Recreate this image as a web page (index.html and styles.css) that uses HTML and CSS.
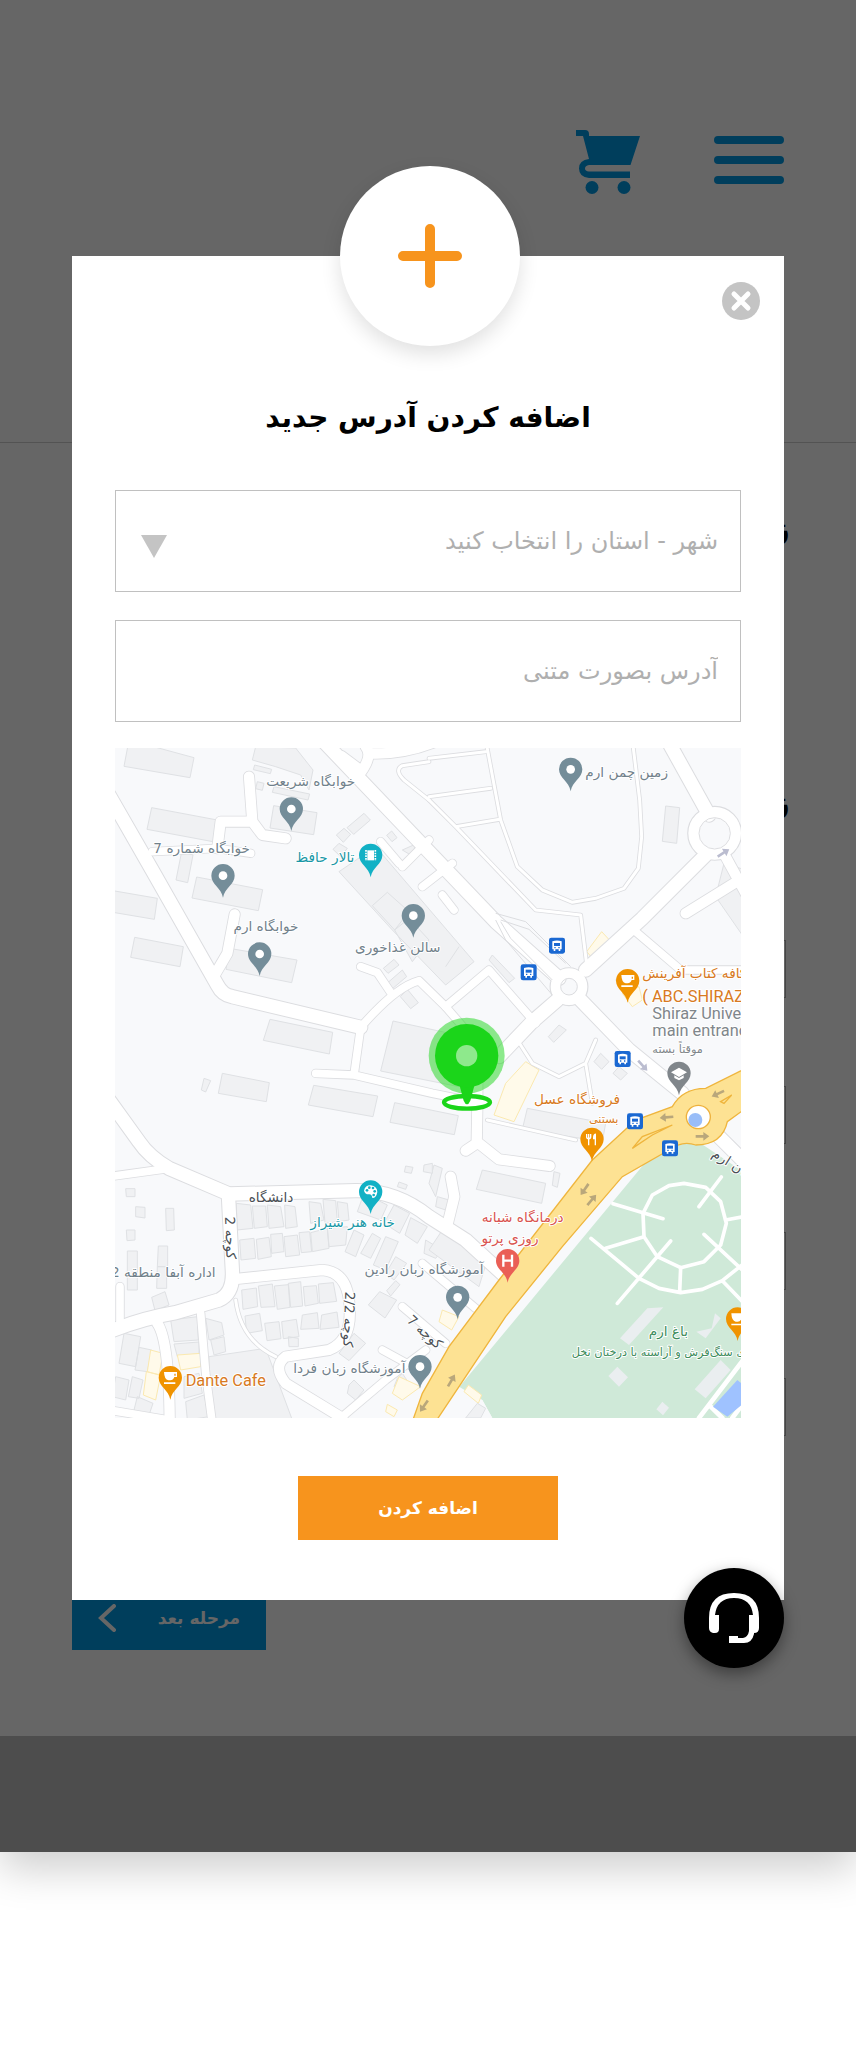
FILE: index.html
```html
<!DOCTYPE html>
<html lang="fa" dir="rtl">
<head>
<meta charset="utf-8">
<meta name="viewport" content="width=device-width, initial-scale=1">
<title>اضافه کردن آدرس جدید</title>
<link rel="stylesheet" href="styles.css">
</head>
<body>
<div class="page">
  <div class="checkout">
    <header class="topbar">
      <button class="icon-button" type="button" aria-label="منو">
        <svg width="70" height="48" viewBox="0 0 70 48" fill="none" stroke="currentColor" stroke-width="8" stroke-linecap="round"><path d="M4 4H66M4 24H66M4 44H66"/></svg>
      </button>
      <a class="icon-button" href="#cart" aria-label="سبد خرید">
        <svg width="64" height="64" viewBox="0 0 64 64" fill="currentColor"><path d="M0 0H9Q13 0 13 4V6H64L54.500 35H13Q9 35.500 9 38.500Q9 41 13 41.500H54V48H13Q3 47 3 38.500Q3 30 13 29L7 6H0Z"/><circle cx="16" cy="57.500" r="6.500"/><circle cx="48" cy="57.500" r="6.500"/></svg>
      </a>
    </header>
    <main class="steps">
      <h2 class="steps-title">زمان</h2>
      <h2 class="steps-title">زمان</h2>
      <div class="slots">
        <div class="slot"></div>
        <div class="slot"></div>
        <div class="slot"></div>
        <div class="slot"></div>
      </div>
      <button class="next" type="button">
        <span>مرحله بعد</span>
        <svg width="18" height="28" viewBox="0 0 18 28" fill="none" stroke="currentColor" stroke-width="4" stroke-linecap="round"><path d="M16 2L3 14L16 26"/></svg>
      </button>
    </main>
    <footer class="footer"></footer>
  </div>
  <div class="overlay">
    <section class="modal" role="dialog" aria-labelledby="modal-title">
      <div class="badge">
        <svg width="64" height="64" viewBox="0 0 64 64" stroke="#f7941d" stroke-width="10" stroke-linecap="round"><path d="M32 5V59M5 32H59"/></svg>
      </div>
      <button class="close" type="button" aria-label="بستن">
        <svg width="38" height="38" viewBox="0 0 38 38"><circle cx="19" cy="19" r="19" fill="#c4c4c4"/><path d="M12 12L26 26M26 12L12 26" stroke="#fff" stroke-width="5" stroke-linecap="round"/></svg>
      </button>
      <h1 class="title" id="modal-title">اضافه کردن آدرس جدید</h1>
      <form class="form">
        <div class="fields">
          <div class="select-wrap">
            <select class="field" aria-label="شهر - استان"><option>شهر - استان را انتخاب کنید</option></select>
            <svg class="arrow" width="26" height="23" viewBox="0 0 26 23"><path d="M0 0H26L13 23Z" fill="#c4c4c4"/></svg>
          </div>
          <input class="field" type="text" placeholder="آدرس بصورت متنی" aria-label="آدرس بصورت متنی">
        </div>
        <svg class="map" viewBox="18 24 1878 2010" role="img" aria-label="نقشه">
          <defs>
            <path id="pin" d="M0 66C-5 36-35 26-35 0A35 35 0 1 1 35 0C35 26 5 36 0 66Z"/>
            <g id="bus"><rect x="-24" y="-24" width="48" height="48" rx="7" fill="#1a68d2"/><path d="M-14-13Q0-18 14-13V11H10V16H5V11H-5V16H-10V11H-14Z" fill="#fff"/><path d="M-9-8H9V1H-9Z" fill="#1a68d2"/><path d="M-8 6H-4M4 6H8" stroke="#1a68d2" stroke-width="4"/></g>
            <g id="cup"><use href="#pin" fill="#f09300"/><path d="M-19-17H20V-2H12Q8 8 0 8H-6Q-18 6-19-17ZM12-12V-6H16V-12ZM-19 14H15V19H-19Z" fill="#fff" fill-rule="evenodd"/></g>
            <g id="spot"><use href="#pin" fill="#748d99"/><circle r="13" fill="#fff"/></g>
            <path id="arr" d="M-20-4H3V-13L21 0L3 13V4H-20Z"/>
            <g id="wide">
              <path d="M0 165L135 400L325 735Q340 765 370 770L755 862"/>
              <path d="M640 0L950 325L1160 545L1350 715"/>
              <path d="M1430 690L1600 535L1790 345M1675 0L1800 225"/>
              <path d="M1345 780L1270 845L1170 950M1410 775L1560 930L1720 1060"/>
              <path d="M0 1080L90 1205Q120 1250 180 1285L360 1362L740 1352Q860 1350 960 1430L1070 1500L1190 1610"/>
              <path d="M358 1362L370 1590Q375 1660 330 1680L200 1718Q100 1735 0 1775"/>
              <path d="M1830 1190L1910 1270"/>
            </g>
            <g id="medium">
              <path d="M420 110L430 245L460 285L530 295M430 245H335L325 325M377 523L355 640L320 700"/>
              <path d="M770 20Q795 50 745 110M780 40Q880 45 980 5"/>
              <path d="M370 1618L640 1590Q710 1595 720 1680Q735 1800 660 1830L530 1850Q490 1880 530 1930L700 2034"/>
              <path d="M1105 1010V1100L1103 1210L1070 1232M1103 1205L1170 1258L1322 1278"/>
              <path d="M1025 1310L1036 1370L1015 1455M145 1750Q180 1800 182 2040"/>
              <path d="M1730 520L1875 430M1850 350L1910 460"/>
            </g>
            <g id="small">
              <path d="M755 862Q860 740 930 722L1010 800L1140 690L1280 850M850 765L805 698L755 680"/>
              <path d="M755 862L735 1005M620 1000L735 1005L970 1060L1110 1088M130 335L325 325L425 340"/>
              <path d="M0 1310L180 1285M275 1720L290 1900L310 2050M33 1640V1760M0 2010L180 2040"/>
              <path d="M700 2030L830 1920L950 1830M820 1830L930 1890M815 305L870 370"/>
              <path d="M880 1700L1010 1810M940 1570L1100 1705M1010 800L1070 870"/>
              <path d="M1580 575L1715 690H1900M880 380L960 300M940 440L1030 370"/>
              <path d="M1000 465L1035 510M700 45L760 90"/>
            </g>
            <g id="narrow">
              <path d="M1130 0L1175 240L1225 380L1300 450L1390 487L1460 475L1545 445L1588 385L1598 290L1592 180L1570 0"/>
              <path d="M960 180L1040 260L1280 510L1415 525L1435 690M960 55L1130 35M960 170L1145 145M1040 260L1172 238"/>
              <path d="M960 65L880 77Q855 90 885 120L960 180M1225 900L1270 970L1350 1010L1430 970L1460 900M1430 970L1450 1090"/>
              <path d="M380 1680Q395 1800 500 1850M1135 1140L1400 1200"/>
            </g>
          </defs>
          <rect x="18" y="24" width="1878" height="2010" fill="#f8f9fb"/>
          <g class="house">
            <path d="M60 0L255 53L243 113L45 79ZM128 203L325 240L312 305L114 268ZM218 335L252 345L236 428L201 420ZM263 411L461 449L448 512L249 474ZM0 450L145 475L136 538L0 515ZM77 592L223 620L213 680L65 652Z"/>
            <path d="M361 625L564 660L548 728L351 688ZM483 838L671 877L661 942L463 901ZM494 197L624 218L614 284L483 264ZM440 20L560 24L612 90L600 150L575 105L500 80L430 60ZM437 75L488 88L484 101L433 89ZM445 125L465 130L460 151L440 146ZM495 140L602 162L597 180L490 157Z"/>
            <path d="M765 220L784 240L734 283L714 263ZM705 265L725 283L703 307L682 285ZM690 310L715 325L695 350L672 328ZM848 273L864 293L849 305L833 286ZM690 395L800 320L1095 665L1010 735L850 570ZM790 497L835 457L900 515L857 570ZM857 570L900 535L960 600L910 665ZM1010 680L1050 620M855 658L870 675L837 700L823 685ZM880 690L893 710L848 748L834 730ZM895 748L928 788L905 806L874 770ZM1150 645L1217 715L1200 728L1140 660Z"/>
            <path d="M852 843L1090 895L1050 1040L815 993ZM340 1000L481 1028L472 1085L328 1060ZM285 1015L305 1022L290 1056L277 1050ZM614 1036L806 1068L792 1130L598 1095ZM857 1088L1048 1127L1036 1184L843 1147ZM880 330L925 310L905 345ZM1670 198L1712 203L1703 310L1660 304ZM1845 370L1910 390L1910 600L1820 470Z"/>
            <path d="M1540 700L1570 730L1550 755L1520 720ZM1318 890L1350 855L1372 870L1334 907ZM1475 940L1500 965L1478 988L1455 965ZM1530 980L1555 1000L1535 1020L1512 1000ZM1255 1105L1490 1150L1480 1205L1240 1168ZM1120 1290L1310 1330L1298 1390L1102 1348ZM1335 1295L1353 1300L1345 1342L1330 1336ZM960 1330L975 1275L1000 1285L980 1370ZM985 1370L1020 1380L1010 1410L980 1400Z"/>
            <path d="M382 1390L425 1395L432 1465L384 1470ZM430 1398H470L475 1460L436 1465ZM475 1395L515 1400L525 1460L480 1465ZM527 1395L558 1400L565 1460L530 1465ZM600 1385L635 1390L645 1440L605 1450ZM642 1378L680 1382L685 1445L648 1450ZM685 1385L715 1390L720 1440L690 1445ZM392 1500L435 1495L440 1555L396 1560ZM442 1498L480 1492L487 1550L447 1558ZM485 1483L520 1480L525 1535L488 1540ZM525 1490L565 1485L572 1545L530 1550ZM570 1478L602 1475L608 1535L577 1538ZM605 1478L655 1465L660 1525L610 1535ZM655 1465L715 1460L710 1515L660 1520Z"/>
            <path d="M735 1470L765 1485L740 1550L708 1535ZM790 1480L815 1495L785 1555L755 1540ZM830 1490L868 1505L830 1590L793 1575ZM745 1415L765 1360L835 1395L815 1440ZM855 1395L902 1420L872 1480L825 1450ZM905 1433L955 1460L925 1510L888 1485ZM950 1500L1000 1530L980 1555L945 1540ZM860 1550L893 1570L855 1620L830 1600ZM945 1275L970 1270V1300L943 1295ZM890 1278L912 1282L907 1300L886 1296ZM870 1326L895 1335L890 1348L865 1340ZM50 1346H78V1370H52ZM80 1400L108 1402V1434L80 1430ZM170 1405H194L196 1470L172 1472ZM52 1470H78V1500L54 1502ZM148 1518H176V1580H145ZM55 1533H85V1650H55ZM145 1580H173V1645H143ZM128 1672L168 1655L180 1695L138 1712Z"/>
            <path d="M398 1650L442 1644L446 1700L402 1708ZM448 1638L490 1632L498 1700L456 1702ZM496 1638L538 1634L543 1702L505 1708ZM538 1630L575 1625L581 1698L545 1702ZM583 1640L622 1637L628 1690L588 1698ZM628 1632L673 1628L683 1684L632 1690ZM408 1728L452 1720L460 1772L413 1780ZM467 1750L510 1745L516 1796L474 1802ZM518 1745L562 1738L570 1790L523 1796ZM538 1790L568 1795V1820H540ZM580 1725L625 1718L630 1765L575 1768ZM638 1725L684 1716L690 1762L633 1768ZM812 1655L863 1680L828 1734L778 1695ZM860 1622L873 1634L845 1668L833 1652Z"/>
            <path d="M185 1740L265 1730L268 1800L195 1805ZM195 1812L270 1806V1840L205 1850ZM45 1780L95 1790L80 1880L30 1870ZM90 1822L128 1830L115 1895L78 1890ZM20 1910L60 1920L50 1980L10 1970ZM70 1910L102 1920L90 1975L58 1970ZM85 1970L132 1990L120 2025L75 2010ZM290 1735L338 1748L345 1785L300 1800ZM305 1800L345 1790L350 1835L315 1845ZM300 1850L470 1825L550 2040H300ZM225 1910L270 1900L280 1960L225 1975ZM230 1985L285 1965L300 2030L235 2040ZM735 1780L770 1810L720 1862L690 1840ZM720 1935L735 1920L765 1950L740 1980L715 1960ZM865 1915L880 1900L900 1930L880 1955L855 1940ZM1000 1470L1130 1575L1110 1640L960 1530ZM1075 2034L1110 1990L1145 2034Z"/>
          </g>
          <g class="shop"><path d="M125 1830L162 1840L150 1905L115 1895ZM112 1895L155 1905L140 1980L103 1965ZM205 1845L275 1840V1880L215 1890ZM835 1993L865 2010L855 2030L830 2015ZM870 1910L935 1940L880 1980L850 1960ZM1478 575L1503 602L1455 660L1433 635ZM1540 760L1590 740L1600 780L1570 800ZM1250 965L1290 990L1215 1145L1155 1125L1190 1030ZM1000 1710L1050 1730L1028 1770L990 1745Z"/></g>
          <g class="case">
            <use href="#wide" stroke-width="46"/><use href="#medium" stroke-width="36"/><use href="#small" stroke-width="28"/><use href="#narrow" stroke-width="14"/>
            <circle cx="1380" cy="740" r="56" stroke-width="5"/><circle cx="1817" cy="280" r="80" stroke-width="5"/>
          </g>
          <g class="street">
            <use href="#wide" stroke-width="40"/><use href="#medium" stroke-width="31"/><use href="#small" stroke-width="23"/><use href="#narrow" stroke-width="9"/>
            <circle cx="1380" cy="740" r="40" stroke-width="30"/><circle cx="1817" cy="280" r="62" stroke-width="34"/>
          </g>
          <g class="ring"><circle cx="1380" cy="740" r="25"/><circle cx="1817" cy="280" r="47"/><path d="M1160 520L1250 545L1385 680M1175 540L1260 568L1370 670M1160 540L1190 600L1330 765M1175 545L1205 595L1330 720"/></g>
          <path d="M1035 1960L1120 1980L1150 2034H1910V1300L1760 1200L1640 1230Z" fill="#cfe9d8"/>
          <path d="M1050 1940L1120 1980L1150 2034H975Z" fill="#f8f9fb"/>
          <path class="shop" d="M1078 1935L1118 1965L1108 1990L1065 1955Z"/>
          <path class="house" d="M1070 2034L1105 1990L1130 2005L1115 2034Z"/>
          <g fill="none" stroke="#fff" stroke-width="11" stroke-linecap="round" stroke-linejoin="round">
            <path d="M1725 1330L1790 1342L1835 1385L1852 1450L1835 1515L1785 1565L1715 1583L1645 1550L1605 1490L1602 1420L1630 1365L1680 1337Z"/>
            <path d="M1512 1391L1662 1436M1446 1495L1590 1615L1650 1645L1715 1658L1780 1648L1840 1622L1905 1570M1490 1525L1600 1492M1685 1503L1525 1690M1837 1311L1770 1400M1850 1440L1905 1430M1785 1483L1900 1590M1715 1583L1712 1655M1840 1622L1905 1690"/>
            <path d="M1770 2034L1910 1850M1805 2000L1840 2034M1870 2034L1910 1980" stroke-width="14"/>
          </g>
          <path d="M1615 1705L1663 1702L1560 1815L1533 1795ZM1808 1765L1818 1720L1835 1735L1790 1795L1762 1775ZM1525 1880L1557 1912L1530 1940L1498 1908ZM1835 1860L1865 1890L1790 1975L1757 1948ZM1660 1985L1680 2003L1662 2026L1642 2008Z" fill="#eaeef0"/>
          <path d="M1885 1920L1910 1940V1985L1855 2030L1812 2000Z" fill="#9fc2ff"/>
          <path class="avenue" d="M940 1960L1020 1820L1170 1620L1450 1260L1580 1140L1690 1100Q1720 1045 1790 1045L1910 985V1105L1855 1145Q1840 1215 1760 1215Q1720 1200 1680 1230L1540 1310L1360 1520L1190 1730L1050 1940L980 2045H910Z"/>
          <path class="avenue" d="M1570 1225L1630 1185L1690 1155L1600 1190ZM1835 1085L1868 1065L1845 1090Z"/>
          <ellipse cx="1768" cy="1131" rx="36" ry="35" fill="#fff" stroke="#eeb13c" stroke-width="4"/><circle cx="1759" cy="1140" r="21" fill="#99bdf8"/>
          <g fill="#b9a77b">
            <use href="#arr" transform="translate(1827 1061) rotate(155)"/><use href="#arr" transform="translate(1673 1132) rotate(175)"/><use href="#arr" transform="translate(1780 1189)"/><use href="#arr" transform="translate(1427 1348) rotate(125)"/><use href="#arr" transform="translate(1448 1380) rotate(-50)"/><use href="#arr" transform="translate(1027 1922) rotate(-60)"/><use href="#arr" transform="translate(945 1998) rotate(125)"/>
          </g>
          <g fill="#bbbdd0"><use href="#arr" transform="translate(1843 339) rotate(-32)"/><use href="#arr" transform="translate(1601 977) rotate(48)"/></g>
          <use href="#bus" x="1344" y="617"/><use href="#bus" x="1259" y="697"/><use href="#bus" x="1541" y="957"/><use href="#bus" x="1578" y="1144"/><use href="#bus" x="1683" y="1225"/>
          <g class="place">
            <text x="605" y="138">خوابگاه شریعت</text>
            <text x="278" y="338">خوابگاه شماره 7</text>
            <text x="471" y="574">خوابگاه ارم</text>
            <text x="866" y="635">سالن غذاخوری</text>
            <text x="1553" y="112">زمین چمن ارم</text>
            <text x="945" y="1602">آموزشگاه زبان رادین</text>
            <text x="721" y="1898">آموزشگاه زبان فردا</text>
            <text class="from-right" x="320" y="1612">اداره آبفا منطقه 2</text>
          </g>
          <g class="place teal"><text x="648" y="366">تالار حافظ</text><text x="731" y="1462">خانه هنر شیراز</text></g>
          <g class="place orange">
            <text class="from-left" x="1600" y="715">کافه کتاب آفرینش</text>
            <text x="1404" y="1092">فروشگاه عسل</text>
            <text class="note" x="1484" y="1148">بستنی</text>
            <text class="latin" x="1600" y="786">( ABC.SHIRAZ )</text>
            <text class="latin" x="230" y="1939">Dante Cafe</text>
          </g>
          <g class="place grey"><text class="latin" x="1630" y="838">Shiraz University</text><text class="latin" x="1630" y="888">main entrance</text><text class="note from-left" x="1630" y="938">موقتاً بسته</text></g>
          <g class="place red"><text x="1241" y="1446">درمانگاه شبانه</text><text x="1203" y="1508">روزی پرتو</text></g>
          <g class="place green"><text x="1678" y="1788">باغ ارم</text><text class="note from-left" x="1388" y="1848">فضای سنگ‌فرش و آراسته با درختان نخل</text></g>
          <g class="place dark">
            <text x="486" y="1386">دانشگاه</text>
            <text transform="translate(350 1494) rotate(88)">کوچه 2</text>
            <text transform="translate(706 1738) rotate(92)">کوچه 2/2</text>
            <text transform="translate(938 1786) rotate(42)">کوچه 7</text>
            <text class="from-left" transform="translate(1806 1248) rotate(32)">خیابان ارم</text>
          </g>
          <use href="#spot" x="547" y="207"/><use href="#spot" x="342" y="407"/><use href="#spot" x="452" y="642"/><use href="#spot" x="913" y="527"/><use href="#spot" x="1385" y="88"/><use href="#spot" x="1046" y="1672"/><use href="#spot" x="933" y="1880"/>
          <use href="#cup" x="1556" y="722"/><use href="#cup" x="184" y="1913"/><use href="#cup" x="1886" y="1737"/>
          <g transform="translate(785 346)"><use href="#pin" fill="#12b1c5"/><path d="M-10-15H10V15H-10Z" fill="#fff"/><path d="M-14-16V17M14-16V17" stroke="#fff" stroke-width="5" stroke-dasharray="5 3"/></g>
          <g transform="translate(785 1356)"><use href="#pin" fill="#12b1c5"/><path d="M-20-4Q-17-20 0-20Q20-17 20 0Q17 18 5 18Q4 8-4 7Q-17 8-20-4Z" fill="#fff"/><g fill="#12b1c5"><circle cx="-11" cy="-5" r="4"/><circle cx="-4" cy="-13" r="4"/><circle cx="7" cy="-12" r="4"/><circle cx="12" cy="-2" r="4"/><circle cx="9" cy="9" r="4"/></g></g>
          <g transform="translate(1710 1000)"><use href="#pin" fill="#80868b"/><path d="M0-17L24-3L0 11L-24-3ZM-14 6L0 14L14 6V14L0 21L-14 14Z" fill="#fff"/></g>
          <g transform="translate(1449 1198)"><use href="#pin" fill="#f09300"/><path d="M-10-2V18M10-16V18M-16-16V-7Q-16-2-10-2T-4-7V-16M-10-16V-3" fill="none" stroke="#fff" stroke-width="4"/><path d="M11-18Q2-16 3 0H11Z" fill="#fff"/></g>
          <g transform="translate(1196 1562)"><use href="#pin" fill="#ea5f56"/><path d="M-13-18V18M13-18V18M-13 0H13" stroke="#fff" stroke-width="7"/></g>
          <ellipse cx="1074" cy="1087" rx="69" ry="19" fill="#fff" stroke="#1bd51a" stroke-width="13"/>
          <circle cx="1073" cy="947" r="114" fill="#1bd51a" opacity=".5"/>
          <path d="M1050 1030L1064 1082Q1074 1104 1084 1082L1098 1030Z" fill="#1bd51a"/>
          <circle cx="1073" cy="947" r="95" fill="#1bd51a"/><circle cx="1073" cy="947" r="32" fill="#8ee98c"/>
        </svg>
        <button class="submit" type="button">اضافه کردن</button>
      </form>
      <button class="support" type="button" aria-label="پشتیبانی">
        <svg width="50" height="50" viewBox="0 0 50 50"><path d="M0 25Q0 0 25 0T50 25V35Q50 40 45 40V41Q43 50 35 50H20V43H29V45H34Q39 44 40 38V22H44Q42 5 25 5T6 22H10V36Q10 40 6 40H4Q0 39 0 35Z" fill="#fff"/></svg>
      </button>
    </section>
  </div>
</div>
</body>
</html>
```
FILE: styles.css
```css
* { box-sizing: border-box; }
body { min-height: 100vh; margin: 0; background: #fff; font-family: "DejaVu Sans", sans-serif; }
button { border: 0; font: inherit; cursor: pointer; }
svg { display: block; }

.page { display: grid; box-shadow: 0 16px 40px rgba(0, 0, 0, .2); }
.checkout, .overlay { grid-area: 1 / 1; min-width: 0; }
.checkout { display: flex; flex-direction: column; background: #fff; }

.topbar { display: flex; align-items: flex-start; gap: 74px; min-height: 443px; padding: 130px 72px; border-bottom: 1px solid #d0d0d0; }
.icon-button { padding: 0; background: none; color: #009be6; }
.topbar button { padding-top: 6px; }

.steps { display: flex; flex: 1; flex-direction: column; padding: 60px 66px 86px 72px; }
.steps-title { margin: 0 0 224px; font-size: 32px; line-height: 50px; }
.steps-title + .steps-title { margin-bottom: 113px; }
.slots { display: grid; gap: 88px; margin-right: 4px; }
.slot { height: 58px; border: 1px solid #b0b0b0; }
.next { display: flex; align-items: center; align-self: flex-end; justify-content: space-between; width: 194px; height: 64px; margin-top: auto; padding: 0 26px; background: #009be6; color: #fff; font-size: 17px; font-weight: 700; }
.footer { min-height: 116px; background: #c1c1c1; }

.overlay { position: relative; padding: 256px 72px 252px; background: rgba(0, 0, 0, .6); }
.modal { position: relative; padding: 134px 43px 60px; background: #fff; }
.badge { position: absolute; top: -90px; left: 50%; display: grid; place-items: center; width: 180px; height: 180px; margin-left: -88px; border-radius: 50%; background: #fff; box-shadow: 0 8px 20px rgba(0, 0, 0, .12); }
.close { position: absolute; top: 26px; right: 24px; padding: 0; background: none; }
.title { margin: 0 0 44px; font-size: 28px; line-height: 56px; text-align: center; }

.form { display: flex; flex-direction: column; gap: 26px; }
.fields { display: grid; gap: 28px; }
.select-wrap { position: relative; }
.field { display: block; width: 100%; height: 102px; padding: 0 22px; border: 1px solid #c0c0c0; border-radius: 0; outline: 0; appearance: none; background: #fff; color: #afafaf; font: 24px "DejaVu Sans", sans-serif; }
.field::placeholder { color: #afafaf; opacity: 1; }
.arrow { position: absolute; top: 45px; left: 26px; }
.submit { align-self: center; width: 260px; height: 64px; margin-top: 32px; background: #f7941d; color: #fff; font-size: 17px; font-weight: 700; }
.support { position: absolute; right: 0; bottom: -68px; display: grid; place-items: center; width: 100px; height: 100px; padding: 0; border-radius: 50%; background: #000; box-shadow: 0 6px 16px rgba(0, 0, 0, .4); }

.map { width: 100%; height: auto; }
.house { fill: #f0f1f3; stroke: #dfe1e4; stroke-width: 3; }
.shop { fill: #fffaea; stroke: #fbe9b0; stroke-width: 3; }
.case { fill: none; stroke: #dcdde0; stroke-linecap: round; stroke-linejoin: round; }
.street { fill: none; stroke: #fff; stroke-linecap: round; stroke-linejoin: round; }
.ring { fill: none; stroke: #dcdde0; stroke-width: 3; }
.avenue { fill: #fde293; stroke: #efb53d; stroke-width: 4; }
.place { fill: #71818b; stroke: #fff; stroke-width: 6px; paint-order: stroke; stroke-linejoin: round; font-family: "DejaVu Sans", sans-serif; font-size: 41px; direction: rtl; text-anchor: middle; }
.teal { fill: #1897a6; }
.orange { fill: #d87a22; }
.grey { fill: #80868b; }
.red { fill: #d9534f; }
.green { fill: #3d8c5c; }
.dark { fill: #4a4f55; }
.note { font-size: 34px; }
.from-right { text-anchor: start; }
.from-left { text-anchor: end; }
.latin { direction: ltr; text-anchor: start; font-family: Roboto, sans-serif; font-size: 49px; }
```
